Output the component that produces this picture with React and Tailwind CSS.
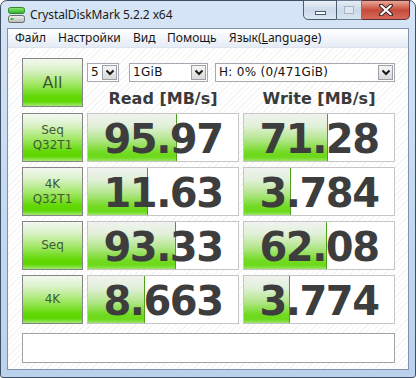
import React from "react";

const rows = [
  { label: ["Seq", "Q32T1"], r: "95.97", rw: 89, w: "71.28", ww: 84 },
  { label: ["4K", "Q32T1"], r: "11.63", rw: 60, w: "3.784", ww: 47 },
  { label: ["Seq"], r: "93.33", rw: 88, w: "62.08", ww: 83 },
  { label: ["4K"], r: "8.663", rw: 57, w: "3.774", ww: 46 },
];

function Chevron() {
  return (
    <svg width="10" height="7" viewBox="0 0 10 7">
      <path d="M1.5 1.5 L5 5 L8.5 1.5" fill="none" stroke="#1a1a1a" strokeWidth="2" />
    </svg>
  );
}

function Select({ w, text }) {
  return (
    <div className={`flex h-[19px] border border-[#a3a9b1] bg-white ${w}`}>
      <div className="flex-1 pl-[3px] text-[12px] leading-[17px] text-[#111] tracking-[0.3px] font-['DejaVu_Sans',sans-serif] whitespace-nowrap overflow-hidden">
        {text}
      </div>
      <div className="m-[1px] w-[15px] border border-[#9aa0a8] bg-gradient-to-b from-[#f6f6f6] to-[#d9d9d9] flex items-center justify-center">
        <Chevron />
      </div>
    </div>
  );
}

function Cell({ value, bar }) {
  return (
    <div className="relative w-[152px] h-[49px] border border-[#c6c6c6] bg-white overflow-hidden">
      <div
        className="absolute left-0 top-0 bottom-0 border-r border-[#4f9f1c] bg-[linear-gradient(to_bottom,#f0f2ef_0%,#e2f0da_25%,#b2e68a_55%,#72da22_82%,#6cd91a_92%,#9be466_100%)]"
        style={{ width: bar }}
      />
      <div className="relative h-full flex items-center justify-center pt-[2px] text-[40px] leading-none font-bold tracking-[-1.5px] text-[#3d3d3d] font-['DejaVu_Sans',sans-serif]">
        {value}
      </div>
    </div>
  );
}

function GreenButton({ children, className = "" }) {
  return (
    <div
      className={`w-[61px] h-[49px] border border-[#858585] bg-[linear-gradient(to_bottom,#f3f8f0_0%,#dcf2cc_22%,#a4e86a_52%,#62d806_80%,#5ed600_90%,#a2e874_100%)] flex flex-col items-center justify-center text-[#3f5a36] font-['DejaVu_Sans',sans-serif] ${className}`}
    >
      {children}
    </div>
  );
}

function AppIcon() {
  return (
    <svg width="17" height="16" viewBox="0 0 17 16">
      <defs>
        <linearGradient id="gi" x1="0" y1="0" x2="0" y2="1">
          <stop offset="0" stopColor="#8fe86f" />
          <stop offset="1" stopColor="#2fae2f" />
        </linearGradient>
        <linearGradient id="di" x1="0" y1="0" x2="0" y2="1">
          <stop offset="0" stopColor="#f0f0f0" />
          <stop offset="1" stopColor="#b8b8b8" />
        </linearGradient>
      </defs>
      <rect x="0.5" y="0.5" width="16" height="6" rx="2" fill="url(#gi)" stroke="#2a8a2a" />
      <rect x="0.5" y="8.5" width="16" height="7" rx="2" fill="url(#di)" stroke="#6a6a6a" />
      <rect x="2.5" y="11" width="3" height="2" fill="#3cc03c" />
    </svg>
  );
}

export default function App() {
  return (
    <div className="w-[416px] h-[378px] bg-white">
      <div className="w-[416px] h-[378px] rounded-t-[7px] rounded-b-[3px] border border-[#3d4f66] bg-gradient-to-b from-[#d6e5f6] via-[#c6daf0] to-[#bcd2ec] flex flex-col px-[6px] pb-[7px]">
        {/* title bar */}
        <div className="h-[27px] flex items-start">
          <div className="flex items-center h-[27px] pl-[1px]">
            <AppIcon />
            <span className="ml-[5px] text-[12px] text-[#1b1b1b] font-['Noto_Sans',sans-serif] tracking-[-0.1px]">
              CrystalDiskMark 5.2.2 x64
            </span>
          </div>
          <div className="ml-auto mr-[-1px] mt-[-1px] flex h-[20px]">
            <div className="w-[34px] h-full border border-[#4a5b72] rounded-bl-[5px] bg-gradient-to-b from-[#eaf1f9] via-[#cbd9ea] to-[#dbe6f3] flex items-center justify-center">
              <div className="mt-[5px] w-[11px] h-[4px] bg-white border border-[#4b5a6c]" />
            </div>
            <div className="w-[25px] h-full border-y border-r border-[#6a7b92] bg-gradient-to-b from-[#e4edf7] via-[#cdd9e8] to-[#d9e4f1] flex items-center justify-center">
              <div className="w-[10px] h-[8px] border border-[#a9b5c4] bg-[#dfe7f1]" />
            </div>
            <div className="w-[48px] h-full border-y border-r border-[#5a3030] rounded-br-[5px] bg-gradient-to-b from-[#e8a898] via-[#c74a3a] to-[#d4685a] flex items-center justify-center">
              <svg width="14" height="12" viewBox="0 0 14 12">
                <path d="M2 1.5 L12 10.5 M12 1.5 L2 10.5" stroke="#3a2020" strokeWidth="4" strokeLinecap="round" />
                <path d="M2.3 1.8 L11.7 10.2 M11.7 1.8 L2.3 10.2" stroke="#ffffff" strokeWidth="2.2" strokeLinecap="round" />
              </svg>
            </div>
          </div>
        </div>

        {/* client */}
        <div className="flex-1 border border-[#7f93ae] flex flex-col bg-[repeating-linear-gradient(135deg,#ffffff_0px,#ffffff_3px,#f4f4f4_3px,#f4f4f4_4px)]">
          {/* menu */}
          <div className="h-[19px] bg-gradient-to-b from-[#ffffff] to-[#e5ecf5] border-b border-[#dde4ee] flex items-center pl-[7px] text-[12px] text-[#151515] font-['Noto_Sans',sans-serif]">
            <span className="w-[43px]">Файл</span>
            <span className="w-[75px]">Настройки</span>
            <span className="w-[34px]">Вид</span>
            <span className="w-[62px]">Помощь</span>
            <span>
              Язык(<span className="underline">L</span>anguage)
            </span>
          </div>

          {/* content */}
          <div className="pl-[14px] pt-[10px] flex flex-col gap-[5px]">
            {/* header row */}
            <div className="flex gap-[4px]">
              <GreenButton>
                <span className="text-[16px] leading-none">All</span>
              </GreenButton>
              <div className="flex flex-col">
                <div className="mt-[5px] flex">
                  <Select w="w-[32px]" text="5" />
                  <div className="w-[10px]" />
                  <Select w="w-[79px]" text="1GiB" />
                  <div className="w-[7px]" />
                  <Select w="w-[180px]" text="H: 0% (0/471GiB)" />
                </div>
                <div className="mt-[7px] flex gap-[4px] text-[16px] leading-[19px] font-bold text-[#3a3a3a] font-['DejaVu_Sans',sans-serif]">
                  <div className="w-[152px] text-center">Read [MB/s]</div>
                  <div className="w-[152px] text-center">Write [MB/s]</div>
                </div>
              </div>
            </div>

            {rows.map((row, i) => (
              <div key={i} className="flex gap-[4px]">
                <GreenButton>
                  {row.label.map((l) => (
                    <span key={l} className="text-[12px] leading-[15px]">
                      {l}
                    </span>
                  ))}
                </GreenButton>
                <Cell value={row.r} bar={row.rw} />
                <Cell value={row.w} bar={row.ww} />
              </div>
            ))}

            <div className="mt-[4px] w-[373px] h-[30px] border border-[#a3a3a3] bg-white" />
          </div>
        </div>
      </div>
    </div>
  );
}
